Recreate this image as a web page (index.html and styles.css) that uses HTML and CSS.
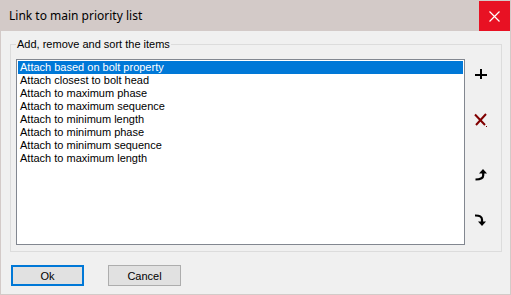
FILE: index.html
```html
<!DOCTYPE html>
<html lang="en">
<head>
    <meta charset="UTF-8">
    <title>Link to main priority list</title>
    <link rel="stylesheet" href="styles.css">
</head>
<body>
    <div class="window">
        <div class="titlebar">
            <span class="title">Link to main priority list</span>
            <button class="close" type="button" aria-label="Close">
                <svg width="11" height="11" viewBox="0 0 11 11"><path d="M0.5 0.5 L10.5 10.5 M10.5 0.5 L0.5 10.5" stroke="#fff" stroke-width="1.2"/></svg>
            </button>
        </div>
        <div class="content">
            <fieldset class="group">
                <legend>Add, remove and sort the items</legend>
                <div class="group-body">
                    <ul class="listbox">
                        <li class="selected">Attach based on bolt property</li>
                        <li>Attach closest to bolt head</li>
                        <li>Attach to maximum phase</li>
                        <li>Attach to maximum sequence</li>
                        <li>Attach to minimum length</li>
                        <li>Attach to minimum phase</li>
                        <li>Attach to minimum sequence</li>
                        <li>Attach to maximum length</li>
                    </ul>
                    <div class="tools">
                        <span class="tool tool-add">
                            <svg width="13" height="11" viewBox="0 0 13 11"><path d="M0 6 H12 M6 0 V10" stroke="#000" stroke-width="2"/></svg>
                        </span>
                        <span class="tool tool-remove">
                            <svg width="14" height="15" viewBox="0 0 14 15"><path d="M1 1.5 L11 12 M12 1 L2 12" stroke="#800000" stroke-width="2"/><rect x="12" y="13" width="1" height="1" fill="#800000"/></svg>
                        </span>
                        <span class="tool tool-up">
                            <svg width="13" height="12" viewBox="0 0 13 12"><polygon points="4,4.5 8,0 12,4.5" fill="#000"/><path d="M8.2 4 V6.5 Q8.2 10.3 0.5 10.5" stroke="#000" stroke-width="2.2" fill="none"/></svg>
                        </span>
                        <span class="tool tool-down">
                            <svg width="12" height="13" viewBox="0 0 12 13"><path d="M0 1.5 Q7 1.3 7 5.5 V8" stroke="#000" stroke-width="2.2" fill="none"/><polygon points="3,7.5 11,7.5 7,12" fill="#000"/></svg>
                        </span>
                    </div>
                </div>
            </fieldset>
            <div class="buttons">
                <button class="btn btn-default" type="button">Ok</button>
                <button class="btn" type="button">Cancel</button>
            </div>
        </div>
    </div>
</body>
</html>
```

FILE: styles.css
```css
body {
    margin: 0;
    font-family: "Liberation Sans", Arial, sans-serif;
    font-size: 11px;
    color: #000;
}
.window {
    width: 511px;
    height: 295px;
    box-sizing: border-box;
    border: 1px solid #d3cac8;
    border-top: none;
    background-color: #f0f0f0;
}
.titlebar {
    display: flex;
    align-items: stretch;
    height: 31px;
    background-color: #d3cac8;
}
.title {
    flex: 1;
    padding-left: 8px;
    line-height: 31px;
    font-family: "Noto Sans", sans-serif;
    font-size: 12px;
    color: #000;
}
.close {
    width: 31px;
    height: 30px;
    margin-top: 1px;
    border: none;
    padding: 0;
    background-color: #e81123;
    display: flex;
    align-items: center;
    justify-content: center;
}
.content {
    padding: 7px 8px 0 9px;
}
.group {
    margin: 0;
    padding: 0 0 6px 5px;
    border: 1px solid #dcdcdc;
}
.group legend {
    padding: 0 1px;
    margin-left: 0;
    line-height: 13px;
}
.group-body {
    display: flex;
    padding-top: 8px;
}
.listbox {
    flex: 1;
    height: 182px;
    margin: 0;
    padding: 1px;
    list-style: none;
    background-color: #fff;
    border: 1px solid #828790;
}
.listbox li {
    height: 13px;
    line-height: 13px;
    padding-left: 2px;
    white-space: nowrap;
}
.listbox li.selected {
    background-color: #0078d7;
    color: #fff;
}
.tools {
    width: 36px;
    display: flex;
    flex-direction: column;
    align-items: flex-start;
    padding-left: 10px;
    box-sizing: border-box;
}
.tool {
    display: block;
    line-height: 0;
}
.tool-add {
    margin-top: 10px;
}
.tool-remove {
    margin-top: 33px;
    margin-left: -1px;
}
.tool-up {
    margin-top: 41px;
}
.tool-down {
    margin-top: 33px;
}
.buttons {
    display: flex;
    gap: 24px;
    margin-top: 13px;
    padding-left: 1px;
}
.btn {
    width: 73px;
    height: 21px;
    padding: 0;
    font-family: "Liberation Sans", Arial, sans-serif;
    font-size: 11px;
    color: #000;
    background-color: #e1e1e1;
    border: 1px solid #adadad;
}
.btn-default {
    border: 2px solid #0078d7;
}
```
